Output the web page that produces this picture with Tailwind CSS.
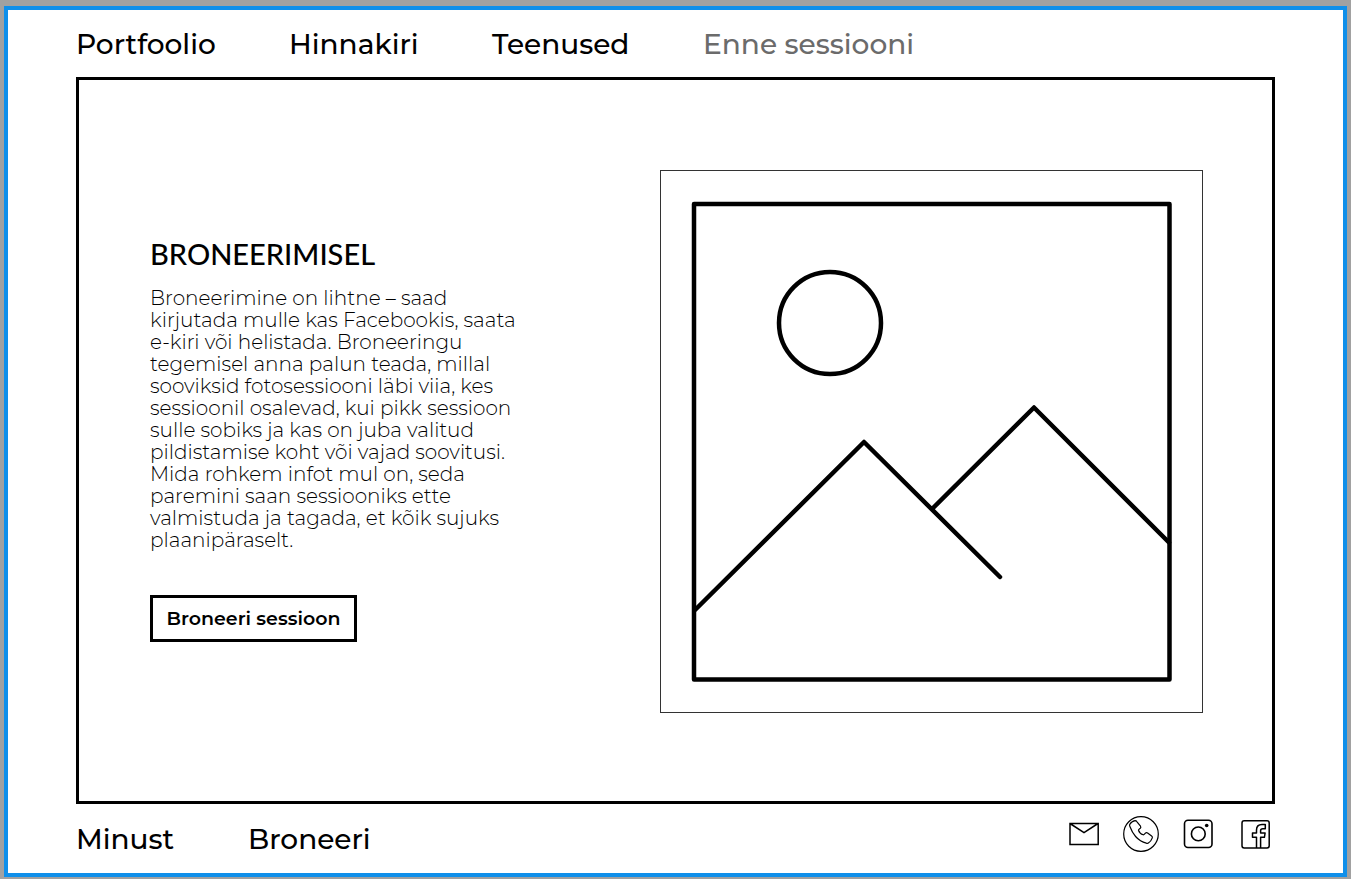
<!DOCTYPE html>
<html lang="et">
<head>
<meta charset="utf-8">
<meta name="viewport" content="width=device-width, initial-scale=1">
<title>Enne sessiooni</title>
<script src="https://cdn.jsdelivr.net/npm/@tailwindcss/browser@4"></script>
</head>
<body class="flex min-h-screen flex-col bg-[#a1a1a1] px-1 pt-1.5 pb-0.5 font-[Montserrat,Inter,sans-serif] text-black">
<div class="flex flex-1 flex-col border-4 border-[#0f8fea] bg-white px-[68px]">
  <header class="flex h-[67px] items-center">
    <nav aria-label="Peamenüü" class="grid grid-cols-[213px_203px_211px_auto] text-[28px] leading-8 font-medium whitespace-nowrap">
      <a href="#portfoolio">Portfoolio</a>
      <a href="#hinnakiri">Hinnakiri</a>
      <a href="#teenused">Teenused</a>
      <a href="#enne" aria-current="page" class="text-[#6b6b6b]">Enne sessiooni</a>
    </nav>
  </header>

  <main class="flex flex-1 items-center justify-between gap-10 border-3 border-black pr-[69px] pl-[71px]">
    <section class="shrink-0">
      <h1 class="font-[Lato,sans-serif] text-[29px] leading-[30px] font-medium">BRONEERIMISEL</h1>
      <p class="mt-4.5 text-[20px] leading-[22px] font-light whitespace-nowrap">Broneerimine on lihtne – saad<br>kirjutada mulle kas Facebookis, saata<br>e-kiri või helistada. Broneeringu<br>tegemisel anna palun teada, millal<br>sooviksid fotosessiooni läbi viia, kes<br>sessioonil osalevad, kui pikk sessioon<br>sulle sobiks ja kas on juba valitud<br>pildistamise koht või vajad soovitusi.<br>Mida rohkem infot mul on, seda<br>paremini saan sessiooniks ette<br>valmistuda ja tagada, et kõik sujuks<br>plaanipäraselt.</p>
      <button type="button" class="mt-11 h-[47px] w-[207px] border-3 border-black text-[19px] leading-6 font-semibold">Broneeri sessioon</button>
    </section>
    <svg class="mt-0.5 w-[543px] min-w-0" viewBox="0 0 543 543" fill="none" stroke="#000" role="img" aria-label="Pildi kohatäide">
      <rect x=".5" y=".5" width="542" height="542" stroke="#333"/>
      <g stroke-width="4.5" stroke-linecap="round" stroke-linejoin="round">
        <rect x="34" y="34" width="475.500" height="475.500"/>
        <circle cx="170" cy="153" r="51"/>
        <path d="M35 440 204 272 340 407M272 339 374 237.500 509 372.500"/>
      </g>
    </svg>
  </main>

  <footer class="flex h-[69px] items-center justify-between">
    <nav aria-label="Jalus" class="grid grid-cols-[172px_auto] text-[28px] leading-8 font-medium whitespace-nowrap">
      <a href="#minust">Minust</a>
      <a href="#broneeri">Broneeri</a>
    </nav>
    <div class="mt-3 flex gap-[21px] self-start pr-0.5">
      <a href="#epost" aria-label="E-post"><svg class="size-9" viewBox="0 0 36 36" fill="none" stroke="#000" stroke-width="1.500"><path d="M4 7.500h28.200v21H4zM4 7.500l14 9.200 14-9.200"/></svg></a>
      <a href="#telefon" aria-label="Telefon"><svg class="size-9" viewBox="0 0 36 36" fill="none" stroke="#000" stroke-width="1.200" stroke-linejoin="round"><circle cx="18" cy="18" r="17.300"/><path d="M6.700 8.500C7.800 6.500 9.800 5 12 4.600c1 0 1.500.4 2 1.200l3.500 4.400c.6 1 .5 1.500-.2 2.100-1 .7-1.900 1.200-1.800 1.900.5 1.600 2.700 3.900 4.700 4.600.9.100 1.400-.8 2.200-1.700.7-.7 1.300-.8 2.200-.2l4 3c.8.600 1 1.200.7 2-.7 2-2.200 4-3.900 5.200-.7.500-1.300.4-2.100.1-4-1-7.800-3.400-10.700-6.700-2.800-3.200-4.400-6.500-5.700-10-.3-.7-.5-1.300-.2-2z"/></svg></a>
      <a href="#instagram" aria-label="Instagram"><svg class="size-9" viewBox="0 0 36 36" fill="none" stroke="#000" stroke-width="1.600"><rect x="4.500" y="4.300" width="27.500" height="27.200" rx="3.500"/><circle cx="18.300" cy="17.900" r="6.900"/><circle cx="26.700" cy="9.500" r="1.800" fill="#000" stroke="none"/></svg></a>
      <a href="#facebook" aria-label="Facebook"><svg class="size-9" viewBox="0 0 36 36" fill="none" stroke="#000" stroke-width="1.500" stroke-linejoin="round"><rect x="5" y="4.700" width="27.200" height="27.300" rx="2.200"/><path d="M19.500 32V21.300h-4V17h4v-3c0-3.600 2-5.600 5.500-5.600h3.300v4.400h-2.500c-1.500 0-2.200.5-2.200 2V17h4.500l-.7 4.300h-3.800V32"/></svg></a>
    </div>
  </footer>
</div>
</body>
</html>
